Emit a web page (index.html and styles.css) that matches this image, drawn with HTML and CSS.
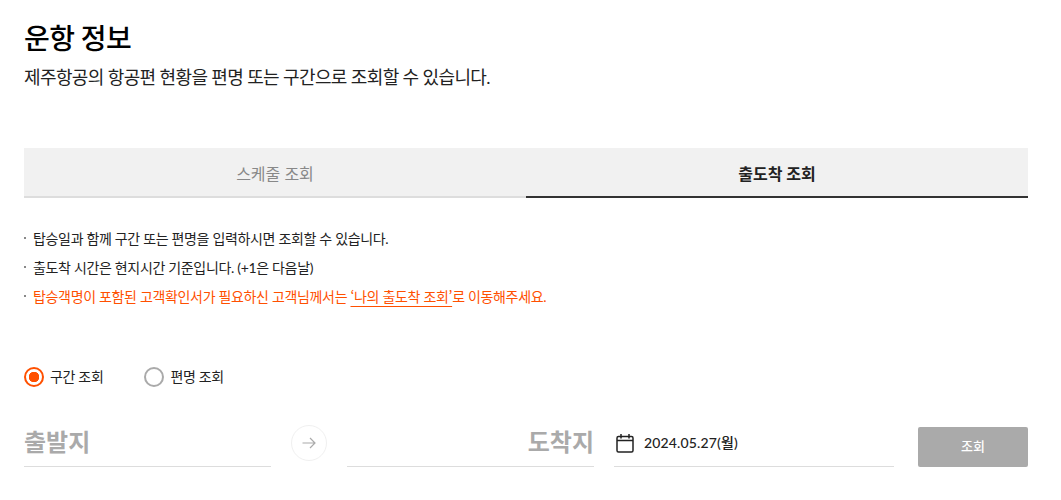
FILE: index.html
```html
<!DOCTYPE html>
<html lang="ko">
<head>
<meta charset="utf-8">
<title>운항 정보</title>
<link rel="stylesheet" href="styles.css">
</head>
<body>
<main class="page">
  <h1 class="title">운항 정보</h1>
  <p class="subtitle">제주항공의 항공편 현황을 편명 또는 구간으로 조회할 수 있습니다.</p>
  <div class="tabs">
    <div class="tab">스케줄 조회</div>
    <div class="tab active">출도착 조회</div>
  </div>
  <ul class="notes">
    <li>탑승일과 함께 구간 또는 편명을 입력하시면 조회할 수 있습니다.</li>
    <li>출도착 시간은 현지시간 기준입니다. (+1은 다음날)</li>
    <li class="warn">탑승객명이 포함된 고객확인서가 필요하신 고객님께서는 <a class="link">‘나의 출도착 조회’</a>로 이동해주세요.</li>
  </ul>
  <div class="radios">
    <label class="radio on"><span class="dot"></span>구간 조회</label>
    <label class="radio"><span class="dot"></span>편명 조회</label>
  </div>
  <div class="search">
    <div class="field place">출발지</div>
    <div class="swap">
      <svg width="14" height="12" viewBox="0 0 14 12" fill="none" stroke="#aaa" stroke-width="1.2"><path d="M0.5 6H13M8 1l5 5-5 5"/></svg>
    </div>
    <div class="field place end">도착지</div>
    <div class="field date">
      <svg class="cal" width="18" height="20" viewBox="0 0 18 20" fill="none" stroke="#222" stroke-width="1.5"><rect x="1" y="3.5" width="16" height="15.5" rx="1.5"/><path d="M1 7.5H17M5 1v4.5M13 1v4.5"/></svg>
      <span class="date-text">2024.05.27(월)</span>
    </div>
    <button class="btn">조회</button>
  </div>
</main>
</body>
</html>
```
FILE: styles.css
```css
* { box-sizing: border-box; }
html, body { margin: 0; padding: 0; background: #fff; }
body {
  font-family: Lato, "Noto Sans CJK KR", sans-serif;
  color: #222;
  height: 500px;
  overflow: hidden;
}
.page { width: 1004px; margin-left: 24px; padding-top: 18px; }
.title {
  margin: 0;
  font-size: 28px;
  line-height: 40px;
  font-weight: 500;
  color: #000;
  letter-spacing: -0.6px;
}
.subtitle {
  margin: 7px 0 0;
  font-size: 18px;
  line-height: 24px;
  font-weight: 400;
  color: #222;
  letter-spacing: -0.62px;
}
.tabs { display: flex; margin-top: 59px; }
.tab {
  flex: 1;
  height: 50px;
  background: #f1f1f1;
  border-bottom: 2px solid #ddd;
  text-align: center;
  font-size: 16px;
  line-height: 52px;
  color: #888;
}
.tab.active { border-bottom-color: #333; color: #222; font-weight: 700; }
.notes { list-style: none; margin: 26px 0 0; padding: 0; font-size: 14px; line-height: 29px; letter-spacing: -0.33px; }
.notes li { padding-left: 9px; position: relative; }
.notes li::before {
  content: "";
  position: absolute;
  left: 0;
  top: 13px;
  width: 2px;
  height: 2px;
  background: #888;
}
.warn { color: #ff5000; }
.link {
  font-family: "Noto Sans CJK KR", sans-serif;
  text-decoration: underline;
  text-decoration-color: #ff5000;
  text-decoration-thickness: 1px;
  text-underline-offset: 4px;
  letter-spacing: -0.38px;
}
.radios { display: flex; gap: 41px; margin-top: 56px; }
.radio { display: flex; align-items: center; gap: 6px; font-size: 14px; line-height: 20px; letter-spacing: -0.33px; }
.dot {
  width: 20px;
  height: 20px;
  border-radius: 50%;
  border: 2px solid #aaa;
  background: #fff;
}
.on .dot {
  border-color: #ff5000;
  background: radial-gradient(circle, #ff5000 0 5px, #fff 5.5px);
}
.search { display: flex; align-items: flex-start; margin-top: 30px; }
.field {
  height: 50px;
  border-bottom: 1px solid #ddd;
  line-height: 50px;
}
.place { width: 247px; font-size: 24px; font-weight: 700; color: #aaa; line-height: 50px; }
.place.end { text-align: right; }
.swap {
  width: 36px;
  height: 36px;
  margin: 8px 20px 0;
  border: 1px solid #f0f0f0;
  border-radius: 50%;
  display: flex;
  align-items: center;
  justify-content: center;
}
.date {
  width: 280px;
  margin-left: 20px;
  display: flex;
  align-items: center;
  gap: 10px;
  font-size: 14px;
  font-weight: 500;
}
.cal { margin: 3px 0 0 2px; }
.date-text { letter-spacing: 0.15px; padding-top: 2px; }
.btn {
  width: 110px;
  height: 40px;
  margin: 10px 0 0 24px;
  padding: 0 0 3px;
  border: 0;
  border-radius: 2px;
  background: #aaa;
  color: #fff;
  font: 500 13px "Noto Sans CJK KR", sans-serif;
}
```
